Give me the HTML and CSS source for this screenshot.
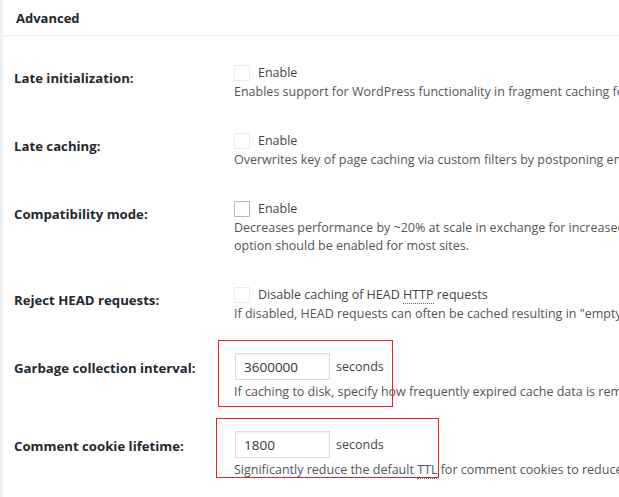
FILE: index.html
```html
<!DOCTYPE html>
<html lang="en">
<head>
  <meta charset="UTF-8" />
  <title>Performance Settings - Advanced</title>
  <link rel="stylesheet" href="styles.css">
</head>
<body>
  <div class="postbox">
    <h3 class="hndle">Advanced</h3>
    <div class="inside">
      <table class="form-table">
        <colgroup>
          <col class="col-label">
          <col>
        </colgroup>
        <tr>
          <th>Late initialization:</th>
          <td>
            <label class="check"><span class="box faint"></span>Enable</label>
            <p class="description">Enables support for WordPress functionality in fragment caching for the page caching engine. Use of this option may reduce performance.</p>
          </td>
        </tr>
        <tr>
          <th>Late caching:</th>
          <td>
            <label class="check"><span class="box faint"></span>Enable</label>
            <p class="description">Overwrites key of page caching via custom filters by postponing entry extraction during the init action.</p>
          </td>
        </tr>
        <tr>
          <th>Compatibility mode:</th>
          <td>
            <label class="check"><span class="box"></span>Enable</label>
            <p class="description">Decreases performance by ~20% at scale in exchange for increased interoperability with more hosting environments and WordPress idiosyncrasies. This<br>option should be enabled for most sites.</p>
          </td>
        </tr>
        <tr>
          <th>Reject HEAD requests:</th>
          <td>
            <label class="check"><span class="box faint"></span>Disable caching of HEAD <abbr title="Hypertext Transfer Protocol">HTTP</abbr> requests</label>
            <p class="description">If disabled, HEAD requests can often be cached resulting in "empty pages" being returned for subsequent requests.</p>
          </td>
        </tr>
        <tr>
          <th>Garbage collection interval:</th>
          <td>
            <div class="field"><input type="text" value="3600000"><span>seconds</span></div>
            <p class="description">If caching to disk, specify how frequently expired cache data is removed. For busy sites, a lower value is best.</p>
          </td>
        </tr>
        <tr>
          <th>Comment cookie lifetime:</th>
          <td>
            <div class="field"><input type="text" value="1800"><span>seconds</span></div>
            <p class="description">Significantly reduce the default <abbr title="Time to Live">TTL</abbr> for comment cookies to reduce the number of pages that are bypassed by the page cache.</p>
          </td>
        </tr>
      </table>
    </div>
  </div>

  <!-- annotation boxes from the screenshot -->
  <div class="mark mark-gc"></div>
  <div class="mark mark-cookie"></div>
</body>
</html>
```

FILE: styles.css
```css
html {
  overflow: hidden;
}
body {
  margin: 0;
  background: #f1f1f1;
  font-family: "Open Sans", sans-serif;
  font-size: 12.5px;
  color: #444;
  position: relative;
  width: 1000px;
}
.postbox {
  margin-left: 3px;
  background: #fff;
  min-height: 497px;
}
.hndle {
  margin: 0;
  padding: 9px 13px 0;
  height: 26px;
  font-size: 13px;
  font-weight: 700;
  color: #23282d;
  border-bottom: 1px solid #eee;
}
.inside {
  padding: 12px 11px 0;
}
.form-table {
  border-collapse: collapse;
  table-layout: fixed;
  width: 970px;
}
.col-label {
  width: 220px;
}
.form-table th {
  padding: 22px 10px 15px 0;
  line-height: 17px;
  text-align: left;
  font-weight: 700;
  font-size: 13.2px;
  color: #23282d;
  vertical-align: top;
  white-space: nowrap;
}
.form-table td {
  padding: 15px 0;
  vertical-align: top;
}
.check {
  display: block;
  height: 20px;
  line-height: 20px;
  color: #444;
}
.box {
  display: inline-block;
  vertical-align: -4px;
  width: 14px;
  height: 14px;
  border: 1px solid #b4b9be;
  margin-right: 8px;
  background: #fff;
}
.box.faint {
  border-color: #ececec;
}
abbr {
  text-decoration: none;
  border-bottom: 1px dotted #666;
}
.description {
  margin: 0;
  color: #555;
  white-space: nowrap;
  line-height: 18px;
}
.field {
  display: flex;
  align-items: flex-start;
  gap: 6px;
  height: 30px;
}
.field span {
  line-height: 27px;
}
.field input {
  width: 95px;
  height: 27px;
  box-sizing: border-box;
  margin: 0 0 0 1px;
  padding: 3px 8px;
  border: 1px solid #ddd;
  box-shadow: inset 0 1px 2px rgba(0, 0, 0, 0.07);
  font-family: "Open Sans", sans-serif;
  font-size: 13.5px;
  color: #32373c;
}
.mark {
  position: absolute;
  border: 1px solid #e8262a;
}
.mark-gc {
  left: 218px;
  top: 340px;
  width: 173px;
  height: 65px;
}
.mark-cookie {
  left: 216px;
  top: 418px;
  width: 221px;
  height: 58px;
}
```
